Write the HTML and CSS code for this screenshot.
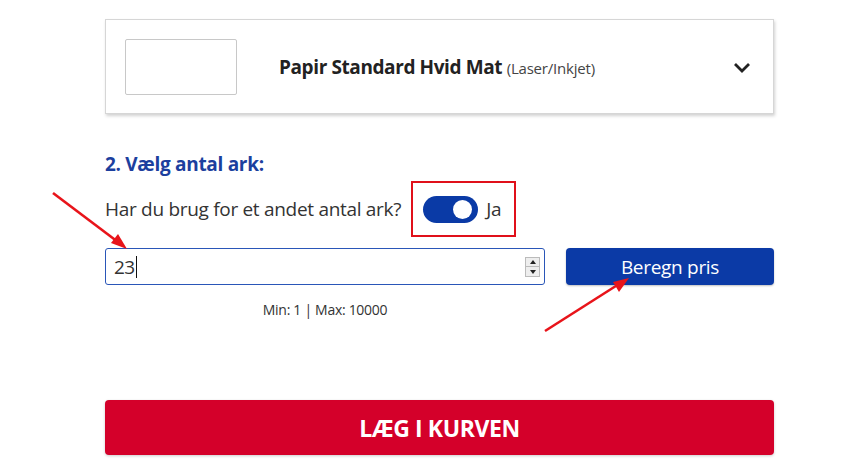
FILE: index.html
```html
<!DOCTYPE html>
<html lang="da">
<head>
<meta charset="utf-8">
<link rel="stylesheet" href="styles.css">
</head>
<body>
<div class="page">
  <div class="card">
    <div class="thumb"></div>
    <div class="title"><b>Papir Standard Hvid Mat</b> <span class="sub">(Laser/Inkjet)</span></div>
    <svg class="chev" width="18" height="12" viewBox="0 0 18 12"><path d="M2 2 L9 9 L16 2" fill="none" stroke="#222" stroke-width="2.8"/></svg>
  </div>

  <h2 class="step">2. Vælg antal ark:</h2>

  <div class="question">
    <span>Har du brug for et andet antal ark?</span>
    <div class="hl">
      <span class="toggle"><span class="knob"></span></span>
      <span class="ja">Ja</span>
    </div>
  </div>

  <div class="qty-row">
    <div class="qty-col">
      <div class="input">
        <span class="val">23</span><span class="caret"></span>
        <span class="spin"><span class="up"></span><span class="down"></span></span>
      </div>
      <div class="minmax">Min: 1 | Max: 10000</div>
    </div>
    <button class="calc">Beregn pris</button>
  </div>

  <button class="cart">LÆG I KURVEN</button>

  <svg class="arrows" width="860" height="472" viewBox="0 0 860 472">
    <g stroke="#e8141a" stroke-width="2.6" fill="#e8141a">
      <line x1="53" y1="193" x2="118" y2="242"/>
      <polygon points="127,249 111,243 118,234" stroke="none"/>
      <line x1="545" y1="331" x2="619" y2="284"/>
      <polygon points="629,278 619,292 613,282" stroke="none"/>
    </g>
  </svg>
</div>
</body>
</html>
```
FILE: styles.css
```css
* { box-sizing: border-box; }
html, body { margin: 0; padding: 0; background: #fff; }
body { font-family: "Open Sans", "Liberation Sans", sans-serif; color: #333; }
.page { position: relative; width: 860px; height: 472px; padding: 19px 86px 0 105px; overflow: hidden; }

.card {
  height: 95px;
  border: 1px solid #d6d6d6;
  box-shadow: 1px 2px 3px rgba(0,0,0,0.18);
  display: flex; align-items: center;
  padding: 0 22px 0 19px;
  background: #fff;
}
.thumb { width: 112px; height: 56px; border: 1px solid #c8c8c8; border-radius: 2px; }
.title { margin-left: 42px; flex: 1; font-size: 19px; color: #222; letter-spacing: -0.4px; }
.title b { font-weight: 700; }
.sub { font-size: 15px; color: #444; letter-spacing: -0.2px; }
.chev { margin-top: 2px; }

.step { margin: 37px 0 0; font-size: 19px; font-weight: 700; color: #1c3f9e; line-height: 26px; letter-spacing: -0.3px; }

.question { display: flex; align-items: center; margin-top: 4px; font-size: 19px; color: #333; height: 56px; letter-spacing: -0.3px; }
.hl { margin-left: 10px; width: 105px; height: 56px; border: 2.5px solid #e0101a; display: flex; align-items: center; padding-left: 10px; }
.toggle { width: 55px; height: 27px; border-radius: 14px; background: #0a3aa6; position: relative; display: inline-block; }
.knob { position: absolute; right: 6px; top: 4px; width: 19px; height: 19px; border-radius: 50%; background: #fff; }
.ja { margin-left: 8px; font-size: 19px; color: #333; }

.qty-row { display: flex; gap: 21px; margin-top: 11px; align-items: flex-start; }
.qty-col { width: 440px; display: flex; flex-direction: column; }
.input {
  height: 37px; border: 1px solid #2a56b8; border-radius: 3px;
  display: flex; align-items: center; padding: 0 4px 0 8px; font-size: 19px; color: #333;
}
.val { letter-spacing: -0.5px; }
.caret { width: 1px; height: 22px; background: #111; margin-left: 1px; }
.spin { margin-left: auto; width: 15px; height: 20px; border: 1px solid #bbb; background: #eee; display: flex; flex-direction: column; }
.up, .down { flex: 1; position: relative; }
.up { border-bottom: 1px solid #bbb; }
.up::after { content: ""; position: absolute; left: 4px; top: 2px; border-left: 3px solid transparent; border-right: 3px solid transparent; border-bottom: 4px solid #222; }
.down::after { content: ""; position: absolute; left: 4px; top: 3px; border-left: 3px solid transparent; border-right: 3px solid transparent; border-top: 4px solid #222; }
.minmax { text-align: center; font-size: 14px; color: #333; margin-top: 15px; letter-spacing: -0.3px; }

.calc {
  width: 208px; height: 37px; border: 0; border-radius: 4px; background: #0b3aa6;
  color: #fff; font-family: inherit; font-size: 19px; box-shadow: 0 1px 2px rgba(0,0,0,0.25);
  letter-spacing: -0.3px;
}

.cart {
  display: block; width: 669px; height: 55px; margin-top: 81px; border: 0; border-radius: 4px;
  background: #d4002a; color: #fff; font-family: inherit; font-size: 23px; font-weight: 700;
  letter-spacing: -0.4px; box-shadow: 0 1px 3px rgba(0,0,0,0.2);
}

.arrows { position: absolute; left: 0; top: 0; pointer-events: none; }
```
